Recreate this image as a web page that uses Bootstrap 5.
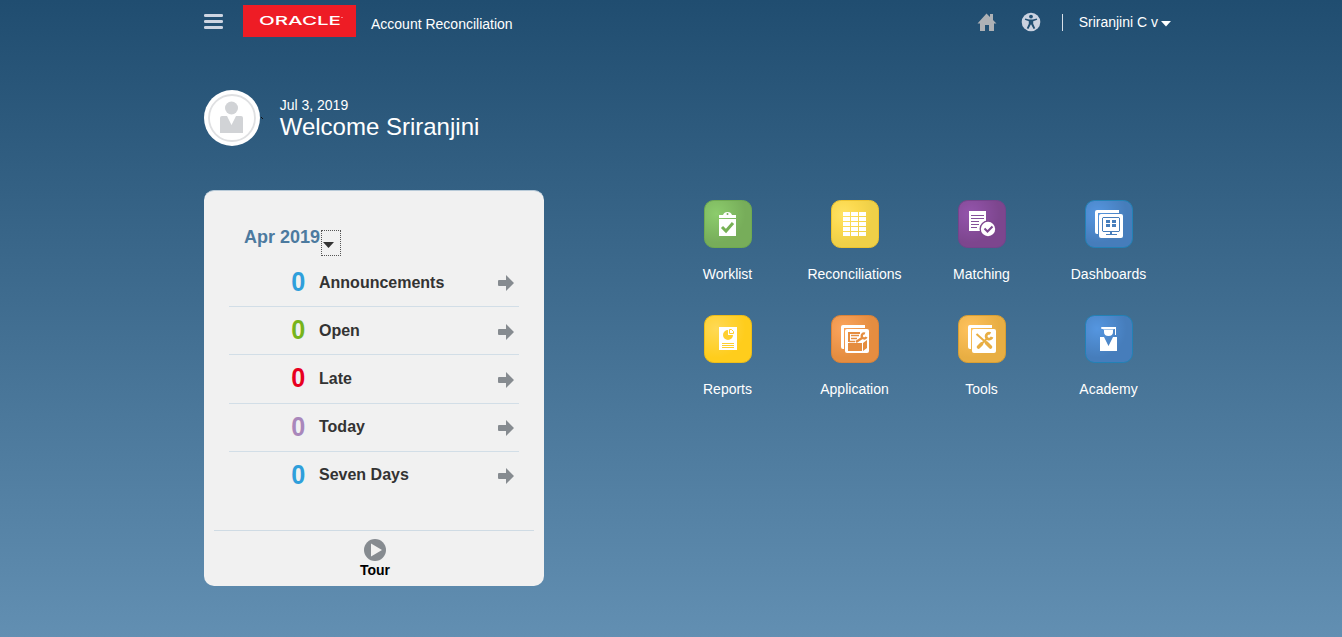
<!DOCTYPE html>
<html lang="en">
<head>
<meta charset="utf-8">
<meta name="viewport" content="width=device-width, initial-scale=1">
<title>Account Reconciliation</title>
<link rel="stylesheet" href="https://cdn.jsdelivr.net/npm/bootstrap@5.3.0/dist/css/bootstrap.min.css">
<style>
body{font-family:"Liberation Sans",Arial,sans-serif;font-size:14px;line-height:16px;color:#fff;height:637px;overflow:hidden;background:linear-gradient(#204d70,#628fb2)}
svg{display:block;flex:none}
.page{width:967px;margin-left:204px}
.topbar{height:46px}
.brand-mark{width:113px;height:32px;margin:5px 0 0 20px;background:#ee1c25}
.app-name{margin:16px 0 0 15px}
.menu-icon{margin-top:13px}
.home-icon{margin-top:13px}
.access-icon{margin:12px 0 0 24px}
.divider{width:1px;height:17px;margin:14px 0 0 21px;background:#d8e0e8}
.user-name{margin:14px 0 0 16px}
.user-caret{margin:21px 0 0 3px}
.speck{margin-top:27px}
.greeting{margin:7px 0 0 16.700px}
.welcome{margin-top:44px;height:56px}
.hello{font-size:24px;line-height:27px}
.main{margin-top:44px}
.panel{width:340px;flex:none;height:396px;border-radius:10px;background:#f1f1f1;border-top:1px solid #b8cad8;color:#333}
.period{font-size:18px;line-height:20px;color:#4c7a9f;padding:36px 0 0 40px;height:68px}
.picker{width:20px;height:26px;margin:3px 0 0 1px;border:1px dotted #555;padding:11px 0 0 1px}
.task{height:48.2px;margin:0 25px;border-bottom:1px solid #d2dee7;font-size:16px}
.task:last-child{border-bottom:0;height:47.2px}
.task svg{margin:1px 5px 0 auto}
.task:nth-child(2) svg,.task:nth-child(3) svg{margin-top:2.500px}
.count{width:28px;margin-left:62px;font-size:28px;line-height:30px;padding-bottom:1px}
.count b{display:inline-block;transform:scaleX(.9);transform-origin:2px 50%}
.tour{margin:31.500px 10px 0;border-top:1px solid #cfdbe4;color:#000;padding:8px 0 0 2px}
.tour span{margin-top:1px}
.apps{width:508px;flex:none;margin:10px 0 0 120.500px}
.app-tile{width:127px;height:115px}
.tile-label{margin:18px 1px 0 0}
</style>
</head>
<body>
<svg width="0" height="0" class="position-absolute" aria-hidden="true">
<defs>
<radialGradient id="g1" cx=".25" cy=".28" r=".62"><stop offset="0" stop-color="#8ccc6c"/><stop offset="1" stop-color="#77ad5a"/></radialGradient>
<radialGradient id="g2" cx=".25" cy=".3" r=".62"><stop offset="0" stop-color="#ffe365"/><stop offset=".5" stop-color="#fbd94f"/><stop offset="1" stop-color="#efd048"/></radialGradient>
<radialGradient id="g3" cx=".25" cy=".28" r=".62"><stop offset="0" stop-color="#9455ac"/><stop offset="1" stop-color="#7d468e"/></radialGradient>
<radialGradient id="g4" cx=".25" cy=".28" r=".62"><stop offset="0" stop-color="#5596e0"/><stop offset="1" stop-color="#467dbb"/></radialGradient>
<radialGradient id="g5" cx=".25" cy=".28" r=".62"><stop offset="0" stop-color="#ffd955"/><stop offset="1" stop-color="#ffcd1c"/></radialGradient>
<radialGradient id="g6" cx=".25" cy=".28" r=".62"><stop offset="0" stop-color="#fba45d"/><stop offset="1" stop-color="#e58d40"/></radialGradient>
<radialGradient id="g7" cx=".25" cy=".28" r=".62"><stop offset="0" stop-color="#ffc25d"/><stop offset="1" stop-color="#e8ae43"/></radialGradient>
<symbol id="go" viewBox="0 0 16 16"><path fill="#868b90" d="M1 5h7V0l8 8-8 8v-5H1q-1 0-1-1V6q0-1 1-1z"/></symbol>
<symbol id="sheets" viewBox="0 0 48 48"><path fill="#fff" d="M12 10h22v3H13v21h-1q-2 0-2-2V12q0-2 2-2z"/><rect x="14" y="14" width="24" height="24" rx="2" fill="#fff"/></symbol>
</defs>
</svg>
<div class="page">
<header class="topbar d-flex align-items-start">
<svg class="menu-icon" width="19" height="17" fill="#ced5e2"><rect y="1" width="19" height="3" rx="1.3"/><rect y="7" width="19" height="3" rx="1.3"/><rect y="13" width="19" height="3" rx="1.3"/></svg>
<div class="brand-mark"><svg width="113" height="32" fill="#fff"><text x="16" y="20" font-family="Inter,sans-serif" font-weight="500" font-size="12" textLength="82" lengthAdjust="spacingAndGlyphs">ORACLE</text><circle cx="99" cy="12.500" r=".6"/></svg></div>
<div class="app-name">Account Reconciliation</div>
<div class="d-flex ms-auto align-items-start">
<svg class="home-icon" width="20" height="20" viewBox="0 0 20 20" fill="#aeb1b5"><path d="M9.5.5 13 4V1h3v6l3.500 3.500H17V18h-5v-6H8v6H3v-7.500H.500z"/></svg>
<svg class="access-icon" width="20" height="20" viewBox="0 0 20 20"><circle cx="10" cy="10" r="9.300" fill="#cbd2e0"/><circle cx="10" cy="4.600" r="1.900" fill="#224f72"/><path fill="#224f72" d="m4.200 6.500 3.900 1h3.800l3.900-1 .4 1.300-4 1.400v2.500l2 4.600-1.600.700L10.200 12.500h-.4L7.400 17l-1.600-.7 2-4.600V9.200l-4-1.400z"/></svg>
<div class="divider"></div>
<div class="user-name">Sriranjini C v</div>
<svg class="user-caret" width="10" height="6"><path fill="#fff" d="M0 0h10L5 5.500z"/></svg>
</div>
</header>
<section class="welcome d-flex">
<svg width="56" height="56" viewBox="0 0 56 56"><circle cx="28" cy="28" r="28" fill="#fff"/><circle cx="28" cy="28" r="23" fill="none" stroke="#dfe0e2" stroke-width="1.800"/><circle cx="27.500" cy="18" r="6.500" fill="#d1d3d6"/><path fill="#d1d3d6" d="M18 26h5l4.500 9 4.500-9h5q2 0 2 2v15H16V28q0-2 2-2z"/></svg>
<svg class="speck" width="3" height="3"><path stroke="#111" d="m1 0 2 2"/></svg>
<div class="greeting"><div>Jul 3, 2019</div><div class="hello">Welcome Sriranjini</div></div>
</section>
<main class="main d-flex align-items-start">
<section class="panel">
<div class="period d-flex fw-bold"><span>Apr 2019</span><span class="picker"><svg width="11" height="6"><path fill="#333" d="M0 0h11L5.500 6z"/></svg></span></div>
<div>
<div class="task d-flex align-items-center fw-bold"><span class="count" style="color:#2f9fdb"><b>0</b></span><span>Announcements</span><svg width="16" height="16"><use href="#go"/></svg></div>
<div class="task d-flex align-items-center fw-bold"><span class="count" style="color:#77b41b"><b>0</b></span><span>Open</span><svg width="16" height="16"><use href="#go"/></svg></div>
<div class="task d-flex align-items-center fw-bold"><span class="count" style="color:#e8001f"><b>0</b></span><span>Late</span><svg width="16" height="16"><use href="#go"/></svg></div>
<div class="task d-flex align-items-center fw-bold"><span class="count" style="color:#a987bb"><b>0</b></span><span>Today</span><svg width="16" height="16"><use href="#go"/></svg></div>
<div class="task d-flex align-items-center fw-bold"><span class="count" style="color:#2f9fdb"><b>0</b></span><span>Seven Days</span><svg width="16" height="16"><use href="#go"/></svg></div>
</div>
<div class="tour d-flex flex-column align-items-center fw-bold"><svg width="22" height="22"><circle cx="11" cy="11" r="11" fill="#868b90"/><path fill="#f1f1f1" d="M7 4.500 18 11 7 17.500z"/></svg><span>Tour</span></div>
</section>
<nav class="apps d-flex flex-wrap">
<div class="app-tile d-flex flex-column align-items-center">
<svg width="48" height="48"><rect x=".5" y=".5" width="47" height="47" rx="9" fill="url(#g1)" stroke="#6faa50"/><path fill="#fff" d="M15 15h4q1-3 4.500-3t4.500 3h4v3H15zM15 19h17v17H15z"/><circle cx="23.500" cy="14" r="1" fill="#77ad5a"/><path fill="none" stroke="#77b155" stroke-width="3" d="m18 27 4 4 7-8"/></svg><span class="tile-label">Worklist</span></div>
<div class="app-tile d-flex flex-column align-items-center">
<svg width="48" height="48"><rect x=".5" y=".5" width="47" height="47" rx="9" fill="url(#g2)" stroke="#edc32f"/><path fill="#fff" d="M12 12h7v4h-7zM20 12h7v4h-7zM28 12h7v4h-7zM12 17h7v4h-7zM20 17h7v4h-7zM28 17h7v4h-7zM12 22h7v4h-7zM20 22h7v4h-7zM28 22h7v4h-7zM12 27h7v4h-7zM20 27h7v4h-7zM28 27h7v4h-7zM12 32h7v4h-7zM20 32h7v4h-7zM28 32h7v4h-7z"/></svg><span class="tile-label">Reconciliations</span></div>
<div class="app-tile d-flex flex-column align-items-center">
<svg width="48" height="48"><rect x=".5" y=".5" width="47" height="47" rx="9" fill="url(#g3)" stroke="#75438b"/><path fill="#fff" d="M11 11h17v20H11z"/><path stroke="#85509a" d="M13 15.500h13M13 18.500h13M13 21.500h8M13 24.500h8M13 27.500h6"/><circle cx="30" cy="29" r="8.500" fill="#7d468e"/><circle cx="30" cy="29" r="7.200" fill="#fff"/><path fill="none" stroke="#7d468e" stroke-width="2" d="m26.500 28.500 3 3 5-5"/></svg><span class="tile-label">Matching</span></div>
<div class="app-tile d-flex flex-column align-items-center">
<svg width="48" height="48"><rect x=".5" y=".5" width="47" height="47" rx="9" fill="url(#g4)" stroke="#2381b5"/><use href="#sheets"/><path fill="none" stroke="#467dbb" d="M18 17.500h16l.5.5v13l-.5.500H18l-.5-.5V18zM21 34.500h11"/><path fill="#467dbb" d="M21 20h4v3h-4zM27 20h4v3h-4zM21 24h4v3h-4zM27 24h4v3h-4zM25 32h2v2h-2z"/></svg><span class="tile-label">Dashboards</span></div>
<div class="app-tile d-flex flex-column align-items-center">
<svg width="48" height="48"><rect x=".5" y=".5" width="47" height="47" rx="9" fill="url(#g5)" stroke="#eebd18"/><path fill="#fff" d="M15 12h18v23H15z"/><path fill="#ffcf2e" d="M24 15v5h5a5 5 0 1 1-5-5z"/><path fill="none" stroke="#ffcf2e" d="M25.500 14.500h2l2 2v2h-4zM18 28.500h12M18 30.500h12M18 32.500h12"/></svg><span class="tile-label">Reports</span></div>
<div class="app-tile d-flex flex-column align-items-center">
<svg width="48" height="48"><rect x=".5" y=".5" width="47" height="47" rx="9" fill="url(#g6)" stroke="#db8339"/><use href="#sheets"/><path fill="#e58d40" d="M17 17h12v2H19v8h-2zM17 28h14v8H17zM32 28l4-3v8l-4 3z"/><path fill="none" stroke="#e58d40" stroke-width="1.300" d="M20 20.500h8M20 23.500h6M18 26.500h6"/><path fill="none" stroke="#e58d40" stroke-width="2.300" d="m25 27 6-4M34 18.500a2.500 2.500 0 1 0 1.500 3.500"/></svg><span class="tile-label">Application</span></div>
<div class="app-tile d-flex flex-column align-items-center">
<svg width="48" height="48"><rect x=".5" y=".5" width="47" height="47" rx="9" fill="url(#g7)" stroke="#d99f33"/><use href="#sheets"/><path fill="none" stroke="#e8ae43" stroke-width="2" d="m18.500 19 9 8"/><path fill="none" stroke="#e8ae43" stroke-width="3.600" stroke-linecap="round" d="m28.500 28 4 4M20.500 32l3-3"/><path fill="none" stroke="#e8ae43" stroke-width="2" d="m22 30.500 7-7"/><path fill="none" stroke="#e8ae43" stroke-width="2.800" d="M32.500 18.500a3 3 0 1 0 1.500 3.500"/></svg><span class="tile-label">Tools</span></div>
<div class="app-tile d-flex flex-column align-items-center">
<svg width="48" height="48"><rect x=".5" y=".5" width="47" height="47" rx="9" fill="url(#g4)" stroke="#2381b5"/><path fill="#fff" d="m16 12.500 1-.5h14v8h-1v-6h-1l-1 .500H19l-3-1zM19 15h9v2q0 4-4.500 4T19 17zM15 22h4l4.500 9 4.500-9h4v14H15z"/></svg><span class="tile-label">Academy</span></div>
</nav>
</main>
</div>
<script src="https://cdn.jsdelivr.net/npm/bootstrap@5.3.0/dist/js/bootstrap.bundle.min.js"></script>
</body>
</html>
